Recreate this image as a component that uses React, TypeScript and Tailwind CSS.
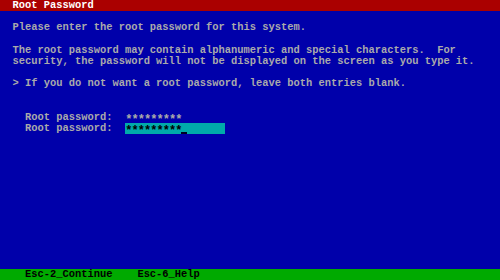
import React from "react";

const Row = ({ children, className = "" }: { children?: React.ReactNode; className?: string }) => (
  <div className={`h-[11.2px] whitespace-pre flex items-center ${className}`}>{children}</div>
);

const Stars = ({ n }: { n: number }) => (
  <span className="inline-block h-[11.2px] text-[12px] leading-[8px] pt-[4px] tracking-[-0.95px] translate-x-[0.3px]">
    {"*".repeat(n)}
  </span>
);

export default function App() {
  return (
    <div
      className="w-[500px] h-[280px] bg-[#0000aa] text-[#aaaaaa] font-bold text-[10.4167px] leading-[11.2px] flex flex-col overflow-hidden"
      style={{ fontFamily: '"Liberation Mono", "DejaVu Sans Mono", monospace' }}
    >
      <Row className="bg-[#aa0000] text-white">{"  Root Password"}</Row>
      <Row />
      <Row>{"  Please enter the root password for this system."}</Row>
      <Row />
      <Row>{"  The root password may contain alphanumeric and special characters.  For"}</Row>
      <Row>{"  security, the password will not be displayed on the screen as you type it."}</Row>
      <Row />
      <Row>{"  > If you do not want a root password, leave both entries blank."}</Row>
      <Row />
      <Row />
      <Row>
        {"    Root password:  "}
        <Stars n={9} />
      </Row>
      <Row>
        {"    Root password:  "}
        <span className="inline-flex h-[11.2px] w-[100px] bg-[#00aaaa] text-black items-center">
          <span className="inline-block w-[56.25px] h-[11.2px]">
            <Stars n={9} />
          </span>
          <span className="inline-flex w-[6.25px] h-[11.2px] flex-col justify-end pb-[0.2px]">
            <span className="block h-[2px] w-full bg-[#000022]" />
          </span>
        </span>
      </Row>
      <div className="flex-1" />
      <Row className="bg-[#00aa00] text-black">{"    Esc-2_Continue    Esc-6_Help"}</Row>
    </div>
  );
}
